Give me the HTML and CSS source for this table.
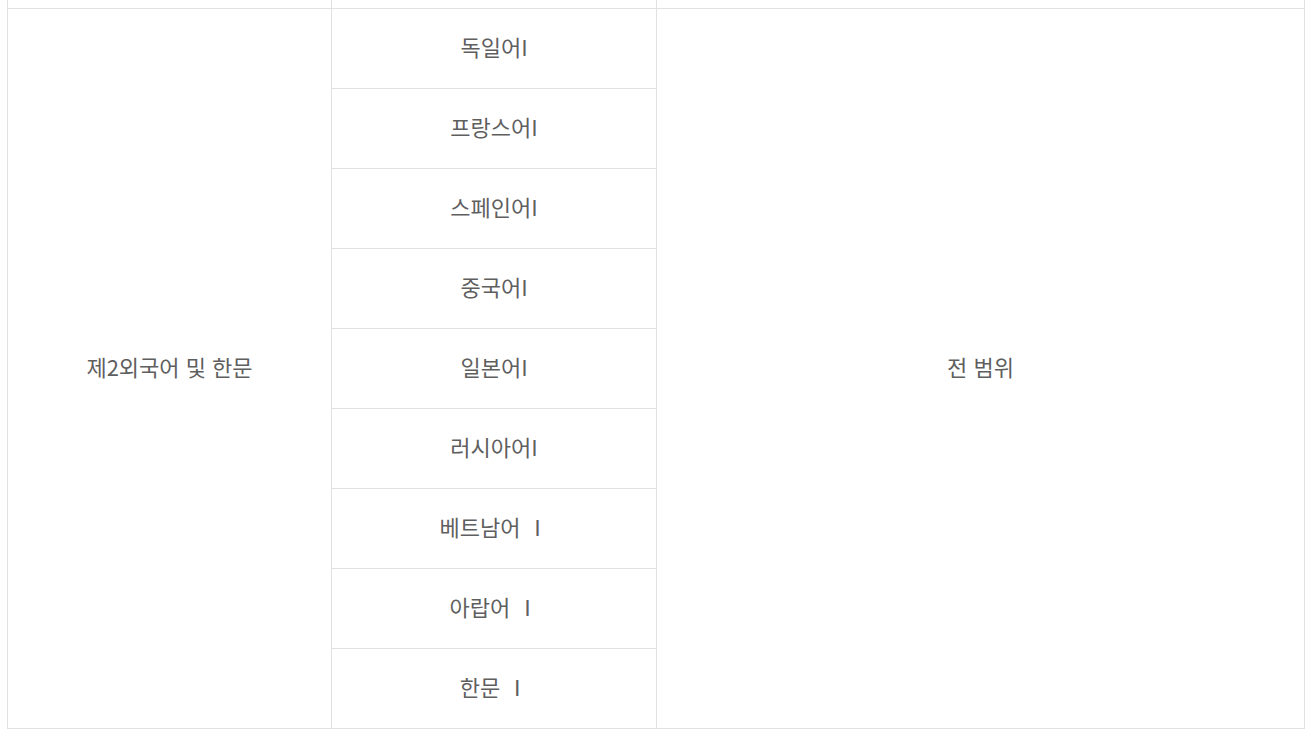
FILE: index.html
```html
<!DOCTYPE html>
<html lang="ko">
<head>
<meta charset="utf-8">
<title>제2외국어 및 한문</title>
<link rel="stylesheet" href="styles.css">
</head>
<body>
<table class="range-table">
  <colgroup>
    <col class="col-subject">
    <col class="col-course">
    <col class="col-range">
  </colgroup>
  <tbody>
    <tr class="row-prev"><td></td><td></td><td></td></tr>
    <tr>
      <td rowspan="9">제2외국어 및 한문</td>
      <td>독일어I</td>
      <td rowspan="9">전 범위</td>
    </tr>
    <tr><td>프랑스어I</td></tr>
    <tr><td>스페인어I</td></tr>
    <tr><td>중국어I</td></tr>
    <tr><td>일본어I</td></tr>
    <tr><td>러시아어I</td></tr>
    <tr><td>베트남어 Ⅰ</td></tr>
    <tr><td>아랍어 Ⅰ</td></tr>
    <tr><td>한문 Ⅰ</td></tr>
  </tbody>
</table>
</body>
</html>
```

FILE: styles.css
```css
html, body {
  margin: 0;
  padding: 0;
  background: #fff;
}

body {
  padding-left: 7px;
  font-family: "Noto Sans CJK KR", "Noto Sans", sans-serif;
}

.range-table {
  border-collapse: collapse;
  table-layout: fixed;
  width: 1297px;
}

.col-subject { width: 324px; }
.col-course { width: 325px; }
.col-range { width: 648px; }

.range-table td {
  border: 1px solid #e1e1e1;
  height: 80px;
  padding: 0 0 3px;
  box-sizing: border-box;
  text-align: center;
  vertical-align: middle;
  font-size: 22px;
  line-height: 1.2;
  color: #5f5f5f;
}

.range-table .row-prev td {
  height: 8px;
  padding: 0;
  border-top: none;
}
```
